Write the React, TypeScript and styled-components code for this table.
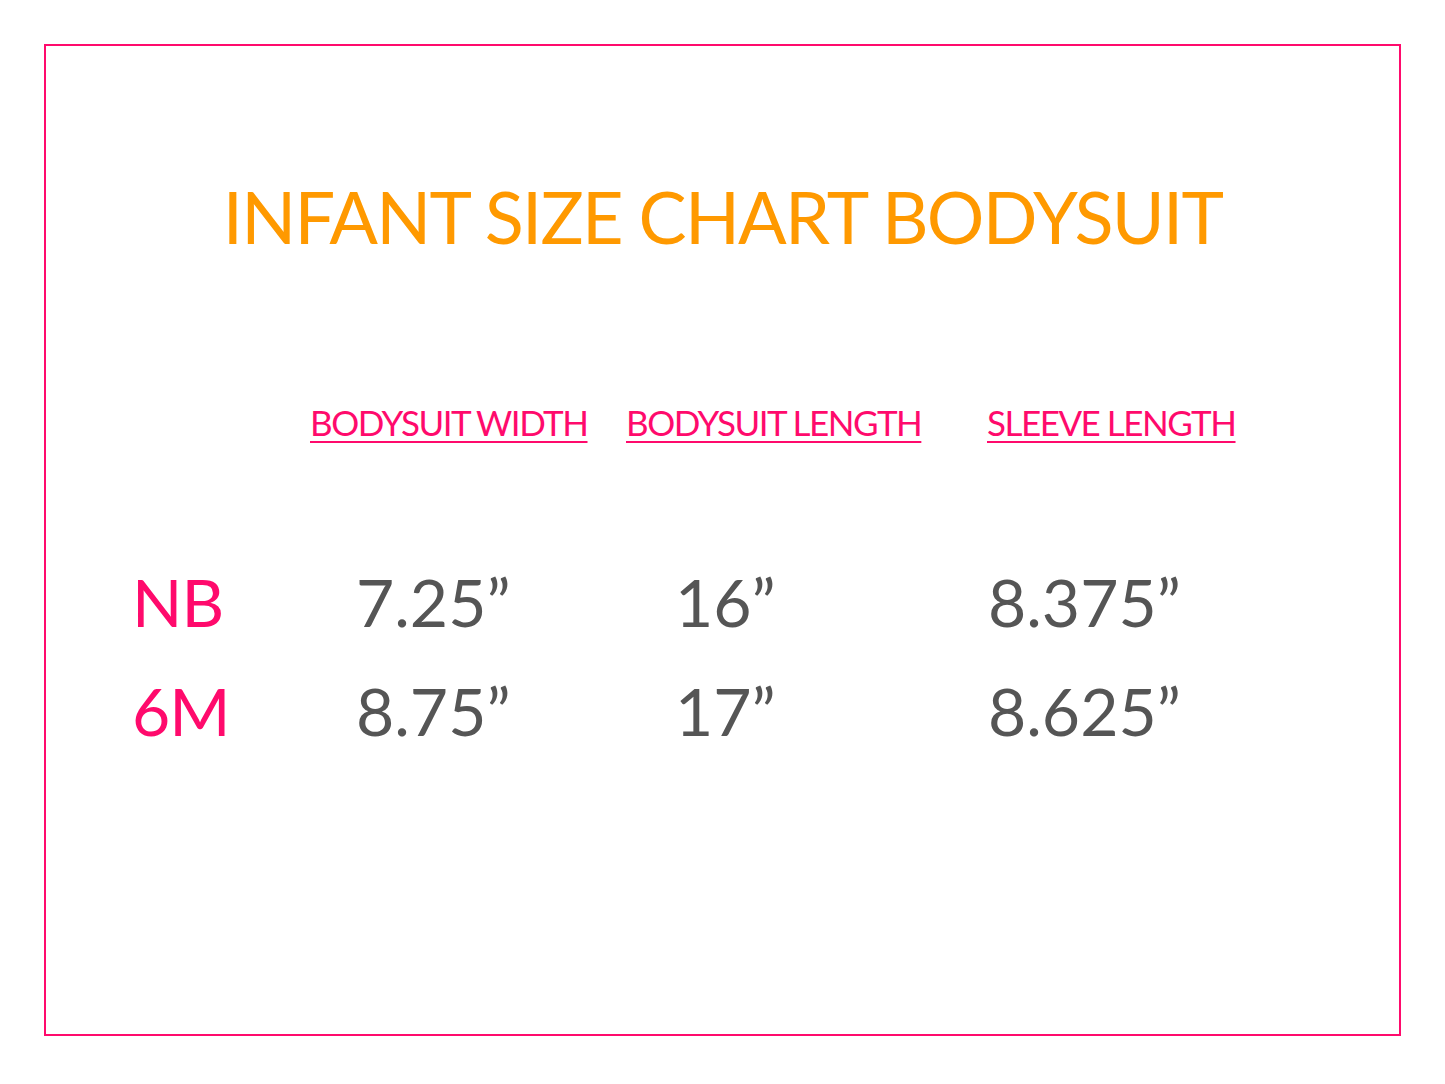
import styled, { createGlobalStyle } from "styled-components";

const GlobalStyle = createGlobalStyle`
  html, body {
    margin: 0;
    padding: 0;
    background: #ffffff;
  }
  body {
    font-family: "Lato", "Liberation Sans", sans-serif;
  }
`;

const Page = styled.div`
  padding: 44px;
  width: 1445px;
  height: 1084px;
  box-sizing: border-box;
`;

const Frame = styled.div`
  box-sizing: border-box;
  width: 1357px;
  height: 992px;
  border: 2px solid #ff0a6c;
  display: flex;
  flex-direction: column;
`;

const Title = styled.h1`
  margin: 130px 0 0;
  font-weight: 400;
  font-size: 72px;
  line-height: 80px;
  color: #ff9900;
  text-align: center;
  letter-spacing: -1.75px;
`;

const Table = styled.div`
  display: grid;
  grid-template-columns: 178px 316px 361px auto;
  padding-left: 86px;
  margin-top: 146px;
`;

const HeadCell = styled.div`
  font-size: 35px;
  line-height: 40px;
  color: #ff0a6c;
  text-decoration: underline;
  text-decoration-thickness: 2px;
  text-underline-offset: 5px;
  letter-spacing: -1.5px;
  white-space: nowrap;
  padding-bottom: 105px;
`;

const Size = styled.div`
  font-size: 66px;
  line-height: 109px;
  color: #ff0a6c;
  letter-spacing: -1px;
`;

const Value = styled.div<{ $offset: number }>`
  font-size: 66px;
  line-height: 109px;
  color: #555555;
  padding-left: ${(p) => p.$offset}px;
  white-space: nowrap;
`;

const headers = ["BODYSUIT WIDTH", "BODYSUIT LENGTH", "SLEEVE LENGTH"];
const offsets = [46, 49, 1];
const rows = [
  { size: "NB", values: ["7.25\u201d", "16\u201d", "8.375\u201d"] },
  { size: "6M", values: ["8.75\u201d", "17\u201d", "8.625\u201d"] },
];

const App = () => {
  return (
    <Page>
      <GlobalStyle />
      <Frame>
        <Title>INFANT SIZE CHART BODYSUIT</Title>
        <Table>
          <div />
          {headers.map((h) => (
            <HeadCell key={h}>{h}</HeadCell>
          ))}
          {rows.map((row) => [
            <Size key={row.size}>{row.size}</Size>,
            ...row.values.map((v, i) => (
              <Value key={row.size + i} $offset={offsets[i]}>
                {v}
              </Value>
            )),
          ])}
        </Table>
      </Frame>
    </Page>
  );
};

export default App;
